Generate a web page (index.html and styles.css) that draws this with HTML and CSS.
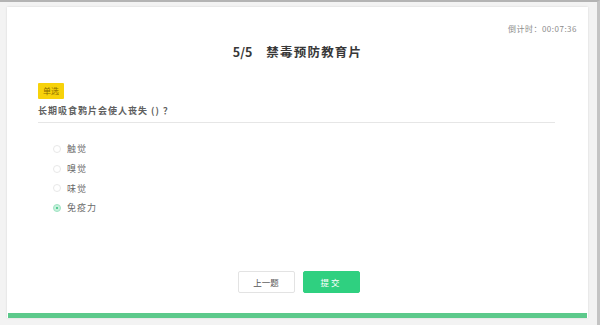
FILE: index.html
```html
<!DOCTYPE html>
<html lang="zh">
<head>
<meta charset="utf-8">
<link rel="stylesheet" href="styles.css">
</head>
<body>
<div class="frame">
  <div class="card">
    <div class="content">
      <div class="timer">倒计时：00:07:36</div>
      <h1 class="title"><span class="num">5/5</span>禁毒预防教育片</h1>
      <div class="question">
        <span class="tag">单选</span>
        <p class="q-text">长期吸食鸦片会使人丧失 () ？</p>
        <ul class="options">
          <li class="option"><span class="radio"></span>触觉</li>
          <li class="option"><span class="radio"></span>嗅觉</li>
          <li class="option"><span class="radio"></span>味觉</li>
          <li class="option"><span class="radio checked"></span>免疫力</li>
        </ul>
      </div>
      <div class="actions">
        <button class="btn btn-prev">上一题</button>
        <button class="btn btn-submit">提交</button>
      </div>
    </div>
    <div class="progress"></div>
  </div>
</div>
</body>
</html>
```
FILE: styles.css
```css
* { box-sizing: border-box; }
html, body {
  margin: 0;
  padding: 0;
  width: 600px;
  height: 325px;
  overflow: hidden;
  background: #f3f3f3;
  font-family: "Noto Sans CJK SC", "Noto Sans", sans-serif;
}
.frame {
  height: 325px;
  border-top: 2px solid #b4b4b4;
  border-right: 3px solid #c4c4c4;
  padding: 5px 9px 0 7px;
}
.card {
  background: #fff;
  box-shadow: 0 0 2px rgba(0,0,0,0.12);
  display: flex;
  flex-direction: column;
  height: 311px;
}
.content {
  flex: 1;
  padding: 16px 11px 0 11px;
}
.timer {
  text-align: right;
  font-size: 8px;
  line-height: 12px;
  color: #8c8c8c;
  letter-spacing: 0.5px;
}
.title {
  margin: 8px 0 0;
  text-align: center;
  font-size: 12.5px;
  line-height: 18px;
  font-weight: bold;
  color: #383838;
  letter-spacing: 1.2px;
}
.title .num { margin-right: 14px; letter-spacing: 0; }
.question {
  margin: 22px 22px 0 20px;
}
.tag {
  display: block;
  width: max-content;
  height: 16px;
  line-height: 16px;
  padding: 0 5px;
  background: #f7d20a;
  color: #8a6d00;
  font-size: 8px;
  border-radius: 1px;
}
.q-text {
  margin: 6px 0 0;
  padding-bottom: 5px;
  font-size: 9px;
  line-height: 12px;
  letter-spacing: 1px;
  font-weight: bold;
  color: #606060;
  border-bottom: 1px solid #e6e6e6;
  white-space: pre;
}
.options {
  list-style: none;
  margin: 16px 0 0;
  padding: 0 0 0 15px;
}
.option {
  display: flex;
  align-items: center;
  height: 19.7px;
  font-size: 9px;
  letter-spacing: 1px;
  color: #6a6a6a;
}
.radio {
  width: 8px;
  height: 8px;
  border-radius: 50%;
  border: 1px solid #e8e8e8;
  margin-right: 6px;
  position: relative;
}
.radio.checked {
  background: #c7f1dd;
  border-color: #9fe3c2;
}
.radio.checked::after {
  content: "";
  position: absolute;
  left: 2px;
  top: 2px;
  width: 2px;
  height: 2px;
  border-radius: 50%;
  background: #2fbf78;
}
.actions {
  display: flex;
  justify-content: center;
  gap: 8px;
  margin-top: 53px;
  margin-left: 2px;
}
.btn {
  width: 57px;
  height: 22px;
  font-size: 8.5px;
  font-family: inherit;
  border-radius: 2px;
  padding: 0;
}
.btn-prev {
  background: #fff;
  border: 1px solid #e3e3e3;
  color: #555;
}
.btn-submit {
  background: #2fd080;
  border: 1px solid #2fd080;
  color: #fff;
  letter-spacing: 2px;
}
.progress {
  height: 5px;
  margin: 0 1px 0 1px;
  background: #5cc98b;
}
```
